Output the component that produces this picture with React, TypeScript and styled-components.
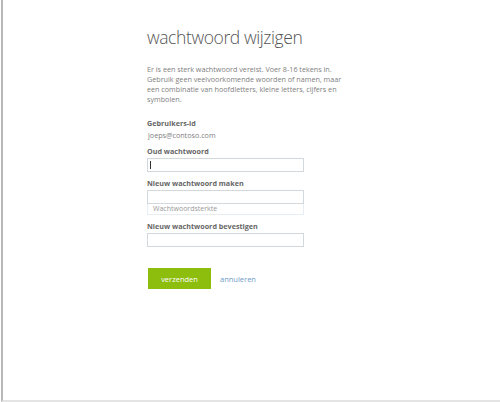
import React from 'react';
import styled, { createGlobalStyle } from 'styled-components';

const GlobalStyle = createGlobalStyle`
    html, body {
        margin: 0;
        padding: 0;
        background: #ffffff;
    }
    body {
        font-family: 'Open Sans', 'Noto Sans', sans-serif;
        color: #666;
    }
`;

const introLines = [
    'Er is een sterk wachtwoord vereist. Voer 8-16 tekens in.',
    'Gebruik geen veelvoorkomende woorden of namen, maar',
    'een combinatie van hoofdletters, kleine letters, cijfers en',
    'symbolen.',
];

const App = () => {
    return (
        <>
            <GlobalStyle />
            <Frame>
                <Form>
                    <Title>wachtwoord wijzigen</Title>
                    <Intro>
                        {introLines.map((line, idx) => (
                            <IntroLine key={idx}>{line}</IntroLine>
                        ))}
                    </Intro>
                    <Field>
                        <Label>Gebruikers-id</Label>
                        <UserId>joeps@contoso.com</UserId>
                    </Field>
                    <Field>
                        <Label>Oud wachtwoord</Label>
                        <Input focused />
                    </Field>
                    <Field>
                        <Label>Nieuw wachtwoord maken</Label>
                        <Input />
                        <Strength>Wachtwoordsterkte</Strength>
                    </Field>
                    <Field>
                        <Label>Nieuw wachtwoord bevestigen</Label>
                        <Input />
                    </Field>
                    <Actions>
                        <SubmitButton>verzenden</SubmitButton>
                        <CancelLink href="#">annuleren</CancelLink>
                    </Actions>
                </Form>
            </Frame>
        </>
    );
};

export default App;

const Frame = styled.div`
    box-sizing: border-box;
    width: 500px;
    height: 402px;
    margin-left: 1px;
    border-left: 2px solid #b8b8b8;
    border-bottom: 2px solid #e4e4e4;
    padding: 24px 0 0 144px;
`;

const Form = styled.div`
    width: 200px;
    display: flex;
    flex-direction: column;
`;

const Title = styled.h1`
    margin: 0;
    font-family: 'Open Sans', 'Noto Sans', sans-serif;
    font-weight: 300;
    font-size: 17.5px;
    line-height: 26px;
    color: #555;
    white-space: nowrap;
    letter-spacing: -0.4px;
`;

const Intro = styled.div`
    margin: 14px 0 14px;
    display: flex;
    flex-direction: column;
`;

const IntroLine = styled.div`
    font-size: 7.2px;
    line-height: 10px;
    color: #808080;
    white-space: nowrap;
`;

const Field = styled.div`
    display: flex;
    flex-direction: column;
    margin-bottom: 6px;
`;

const Label = styled.div`
    font-size: 7.2px;
    font-weight: 700;
    line-height: 11px;
    color: #666;
`;

const UserId = styled.div`
    font-size: 7.2px;
    line-height: 11px;
    color: #808080;
    padding: 1px 0 0 1px;
    margin-bottom: -1px;
`;

const Input = styled.div<{ focused?: boolean }>`
    box-sizing: border-box;
    width: 157px;
    height: 14px;
    margin-top: 1px;
    border: 1px solid #d3d8dd;
    background: #fff;
    position: relative;
    &::before {
        content: '';
        display: ${(p) => (p.focused ? 'block' : 'none')};
        position: absolute;
        left: 2px;
        top: 2px;
        width: 1px;
        height: 8px;
        background: #333;
    }
`;

const Strength = styled.div`
    box-sizing: border-box;
    width: 157px;
    height: 11px;
    border: 1px solid #e6eef4;
    border-top: none;
    padding-left: 5px;
    font-size: 7px;
    line-height: 10px;
    color: #999;
`;

const Actions = styled.div`
    display: flex;
    align-items: center;
    gap: 9px;
    margin-top: 15px;
    padding-left: 1px;
`;

const SubmitButton = styled.button`
    box-sizing: border-box;
    width: 63px;
    height: 21px;
    border: none;
    padding: 0;
    background: #8dbd0d;
    color: #fff;
    font-family: 'Open Sans', 'Noto Sans', sans-serif;
    font-size: 7.5px;
    cursor: pointer;
`;

const CancelLink = styled.a`
    font-size: 7.5px;
    color: #6f9bc8;
    text-decoration: none;
`;
